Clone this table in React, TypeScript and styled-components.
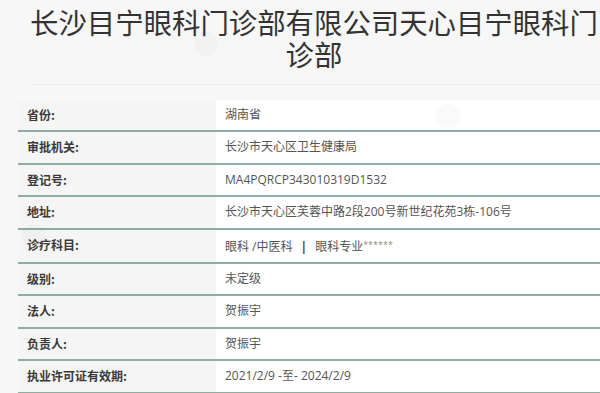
import styled, { createGlobalStyle } from "styled-components";

const GlobalStyle = createGlobalStyle`
  body {
    margin: 0;
    background: #f7f7f7;
    font-family: "Open Sans", "Noto Sans CJK SC", sans-serif;
    overflow: hidden;
  }
`;

const Page = styled.div`
  position: relative;
  width: 600px;
  height: 393px;
  overflow: hidden;
`;

const Content = styled.div`
  width: 600px;
  margin-left: 18px;
`;

const Title = styled.h1`
  margin: 0;
  padding: 6px 8px 0;
  width: 576px;
  text-align: center;
  font-family: "Noto Sans CJK SC", sans-serif;
  font-size: 28.4px;
  font-weight: 400;
  line-height: 32px;
  color: #333;
`;

const Divider = styled.div`
  margin: 14px 0 0 14px;
  height: 1px;
  background: #ececec;
`;

const Table = styled.div`
  margin-top: 15px;
  display: flex;
  flex-direction: column;
`;

const Row = styled.div`
  display: grid;
  grid-template-columns: 198px 1fr;
  border-bottom: 2px solid #8fae9f;
`;

const Label = styled.div`
  padding: 5px 9px;
  line-height: 20.4px;
  font-size: 12px;
  font-weight: 700;
  color: #3a3a3a;
  background: #f5f5f5;
  font-family: "Noto Sans CJK SC", sans-serif;
`;

const Value = styled.div`
  padding: 5px 9px;
  line-height: 20.4px;
  font-size: 12px;
  color: #555;
  background: #fff;
  white-space: nowrap;
`;

const Sep = styled.span`
  margin: 0 8px;
  font-weight: 700;
  color: #444;
`;

const Stars = styled.span`
  font-size: 9px;
  vertical-align: 3px;
  color: #888;
`;

const Mark = styled.div<{ $x: number; $y: number }>`
  position: absolute;
  left: ${(p) => p.$x}px;
  top: ${(p) => p.$y}px;
  width: 24px;
  height: 24px;
  border-radius: 50%;
  background: rgba(120, 120, 120, 0.035);
  pointer-events: none;
`;

const rows: { label: string; value: React.ReactNode }[] = [
  { label: "省份:", value: "湖南省" },
  { label: "审批机关:", value: "长沙市天心区卫生健康局" },
  { label: "登记号:", value: "MA4PQRCP343010319D1532" },
  { label: "地址:", value: "长沙市天心区芙蓉中路2段200号新世纪花苑3栋-106号" },
  {
    label: "诊疗科目:",
    value: (
      <>
        眼科 /中医科<Sep>|</Sep>眼科专业<Stars>******</Stars>
      </>
    ),
  },
  { label: "级别:", value: "未定级" },
  { label: "法人:", value: "贺振宇" },
  { label: "负责人:", value: "贺振宇" },
  { label: "执业许可证有效期:", value: "2021/2/9 -至- 2024/2/9" },
];

export default function App() {
  return (
    <Page>
      <GlobalStyle />
      <Content>
        <Title>长沙目宁眼科门诊部有限公司天心目宁眼科门诊部</Title>
        <Divider />
        <Table>
          {rows.map((r) => (
            <Row key={r.label}>
              <Label>{r.label}</Label>
              <Value>{r.value}</Value>
            </Row>
          ))}
        </Table>
      </Content>
      <Mark $x={194} $y={32} />
      <Mark $x={436} $y={104} />
      <Mark $x={22} $y={224} />
    </Page>
  );
}
